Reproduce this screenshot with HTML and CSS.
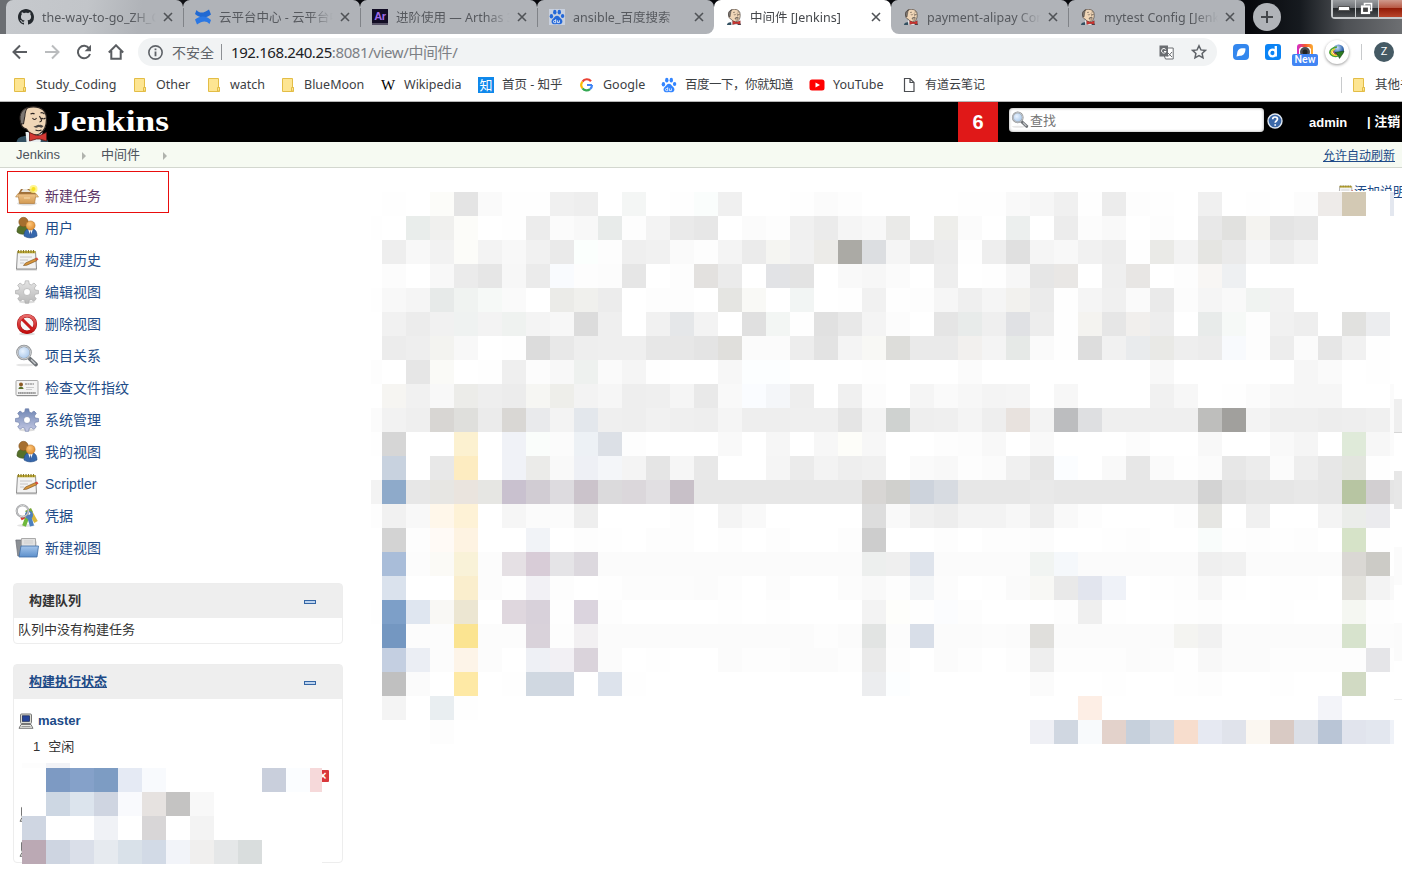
FILE: index.html
```html
<!DOCTYPE html>
<html lang="zh-CN">
<head>
<meta charset="utf-8">
<title>中间件 [Jenkins]</title>
<link rel="stylesheet" href="styles.css">
</head>
<body>
<svg class="defs" width="0" height="0" aria-hidden="true">
  <defs>
    <linearGradient id="gBox" x1="0" y1="0" x2="0" y2="1"><stop offset="0" stop-color="#f0c48a"/><stop offset="1" stop-color="#d29a52"/></linearGradient>
    <linearGradient id="gGrey" x1="0" y1="0" x2="0" y2="1"><stop offset="0" stop-color="#e4e4e4"/><stop offset="1" stop-color="#b9b9b9"/></linearGradient>
    <linearGradient id="gGear" x1="0" y1="0" x2="0" y2="1"><stop offset="0" stop-color="#6f86b4"/><stop offset="1" stop-color="#c5c9e4"/></linearGradient>
    <linearGradient id="gRed" x1="0" y1="0" x2="0" y2="1"><stop offset="0" stop-color="#e86a6a"/><stop offset="1" stop-color="#c40d0d"/></linearGradient>
    <linearGradient id="gBlue" x1="0" y1="0" x2="0" y2="1"><stop offset="0" stop-color="#a5c6ec"/><stop offset="1" stop-color="#5c8fcb"/></linearGradient>
    <linearGradient id="gInsta" x1="0" y1="0" x2="1" y2="0"><stop offset="0" stop-color="#d22bd0"/><stop offset=".5" stop-color="#f5552f"/><stop offset="1" stop-color="#fbb034"/></linearGradient>
    <radialGradient id="gLens" cx=".4" cy=".4" r=".7"><stop offset="0" stop-color="#e9f3ff"/><stop offset="1" stop-color="#9dbfe6"/></radialGradient>
    <radialGradient id="gGlobe" cx=".4" cy=".3" r=".8"><stop offset="0" stop-color="#c4dcf5"/><stop offset=".6" stop-color="#3c6fb5"/><stop offset="1" stop-color="#1a3566"/></radialGradient>
    <radialGradient id="gHead" cx=".4" cy=".35" r=".7"><stop offset="0" stop-color="#ffc77c"/><stop offset="1" stop-color="#dd8a2c"/></radialGradient>

    <symbol id="close" viewBox="0 0 10 10"><path d="M1 1l8 8M9 1L1 9" stroke="#505357" stroke-width="1.600" fill="none"/></symbol>
    <symbol id="butler" viewBox="0 0 32 36">
      <path d="M0 36c1-4 3-5 8-6h16c5 1 6 2 8 6z" fill="#335061"/>
      <path d="M9 26l1 10h14l2-10z" fill="#e9eef0"/>
      <path d="M4 14C3 5 9 .8 17 .8S30 5 30 13c0 8-2 12-7 15-5 2-10 0-13-5-5-1-6-5-6-9z" fill="#f0d6b7" stroke="#2b2421" stroke-width="1.200"/>
      <path d="M4 16C2 8 6 3 11 1.600 8 6 9 9 8 12l-1 6c-2 0-3-1-3-2z" fill="#7c7672" stroke="#2b2421"/>
      <path d="M14 8c2-1 3-1 4 0M24 7c2-1 3 0 4 1M16 12c1 2 3 2 4 0M25 12c1 1 3 1 4 0M23 10c1 3 4 5 0 6M19 24c2 1 4 1 6 0" fill="none" stroke="#2b2421" stroke-width="1.100"/>
      <path d="M17 20c2 1 4-2 6-1 2-1 3 1 4 1-2 3-3 1-5 1-2 1-4 1-5-1z" fill="#4a4542"/>
      <path d="M13 26.500l7 3h3l7-3v8.500l-7-2h-3l-7 2z" fill="#d33833" stroke="#5c1613" stroke-width=".8"/>
    </symbol>
    <symbol id="paw" viewBox="0 0 16 16"><ellipse cx="2.400" cy="7.200" rx="1.700" ry="2.200"/><ellipse cx="5.800" cy="3.200" rx="1.700" ry="2.400"/><ellipse cx="10.300" cy="3.200" rx="1.700" ry="2.400"/><ellipse cx="13.600" cy="7" rx="1.700" ry="2.100"/><path d="M8 6.800c2 0 2.500 1.800 4 3 2.200 1.800 1.800 5-1 5.400-1.500.2-2-.2-3-.2s-1.500.4-3 .2c-2.800-.4-3.200-3.600-1-5.400 1.500-1.200 2-3 4-3z"/><path d="M6.700 10.200v3.500H5.600a1.100 1.100 0 010-2.200h1M8.400 11.400v2.200h2v-2.200" fill="none" stroke="#fff" stroke-width=".8"/></symbol>
    <symbol id="folder" viewBox="0 0 16 16"><path d="M2.500 1.500h10v9h1v4h-11z" fill="#fde592" stroke="#e3bd46"/><path d="M11.500 14v-3.500h2V14z" fill="#fde592" stroke="#e3bd46"/></symbol>

    <symbol id="box" viewBox="0 0 24 24">
      <ellipse cx="12" cy="19.500" rx="10" ry="2" fill="#ddd"/>
      <path d="M3 10l3-5h11l4 5z" fill="#a0703a"/><path d="M6 8l2-3h4l4 3z" fill="#e9e4da"/>
      <path d="M3 10h18l-1.500 9.500h-15z" fill="url(#gBox)" stroke="#b07d3e" stroke-width=".7"/>
      <path d="M3 9.500L.6 13h3M21 9.500l2.500 3.500h-3" fill="#efc890" stroke="#b07d3e" stroke-width=".6"/><path d="M9 14h6" stroke="#f7dcae"/>
      <circle cx="18.500" cy="5" r="4" fill="#fff27a" opacity=".85"/><circle cx="18.500" cy="5" r="2" fill="#f7e11c"/>
    </symbol>
    <symbol id="users" viewBox="0 0 24 24">
      <path d="M2 16c0-5 2-7 6-7s6 3 6 7c-3 3-9 3-12 0z" fill="#55702a" stroke="#3b4f1b" stroke-width=".6"/>
      <circle cx="8.500" cy="6" r="4.700" fill="#a66f2f" stroke="#7d501d" stroke-width=".5"/>
      <path d="M9 20c0-5 2-7.500 6.500-7.500S22 15 22 20c-4 2.500-9 2.500-13 0z" fill="#3567ac" stroke="#234a82" stroke-width=".6"/>
      <path d="M13 13l2.500 7 2.500-7z" fill="#fff"/><path d="M15.500 14l1 5-1 2-1-2z" fill="#3c5fa0"/>
      <circle cx="15.500" cy="9.500" r="4.600" fill="url(#gHead)" stroke="#b16c1f" stroke-width=".5"/>
    </symbol>
    <symbol id="notepad" viewBox="0 0 24 24">
      <path d="M1 21.500h21" stroke="#ccc" stroke-width="2"/>
      <path d="M2.500 3.500h18l1 17.500h-20z" fill="#f3f3f3" stroke="#8f8f8f"/>
      <path d="M2.500 3h18v2.300h-18z" fill="#c4b03a"/><path d="M3.500 2v3M6 2v3M8.500 2v3M11 2v3M13.500 2v3M16 2v3M18.500 2v3" stroke="#8c7c25" stroke-width="1.100"/>
      <path d="M5 9h12M5 12h8M5 15h4" stroke="#c6c6c6"/>
      <path d="M8.500 17.500l2-2.500 10-4.500 1.300 2.200-10 4.500z" fill="#d9963c" stroke="#714919" stroke-width=".6"/><path d="M20 10.300l2-.8 1.500 2-1.900 1z" fill="#d64a3f"/>
    </symbol>
    <symbol id="cog" viewBox="0 0 24 24">
      <ellipse cx="12" cy="22" rx="8" ry="1.300" fill="#ddd" stroke="none"/>
      <path fill-rule="evenodd" d="M10.300.8h3.400l.6 3.300 2 .8L19 3l2.300 2.300-1.900 2.700.8 2 3.300.5v3.200l-3.300.6-.8 2 1.900 2.700-2.400 2.300-2.700-1.800-1.900.8-.6 3h-3.400l-.6-3-2-.8L5 21.300 2.700 19l1.900-2.700-.8-2-3.300-.6v-3.200l3.300-.5.8-2L2.700 5.300 5 3l2.700 1.900 2-.8zM12 8.500a3.500 3.500 0 100 7 3.500 3.500 0 000-7z"/>
    </symbol>
    <symbol id="no" viewBox="0 0 24 24"><ellipse cx="12" cy="22" rx="8" ry="1.300" fill="#ddd"/><circle cx="12" cy="12" r="8.300" fill="#f6f6f6" stroke="#a51010" stroke-width="3.600"/><path d="M6 6l12 12" stroke="#c91a1a" stroke-width="3"/><circle cx="12" cy="12" r="8.300" fill="none" stroke="url(#gRed)" stroke-width="2.800"/></symbol>
    <symbol id="lens" viewBox="0 0 24 24"><ellipse cx="10" cy="21" rx="9" ry="1.300" fill="#e6e6e6"/><path d="M14.500 14.500l6.500 6" stroke="#6d7176" stroke-width="3.800" stroke-linecap="round"/><path d="M16 15.500l4.500 4.500" stroke="#c4c7ca" stroke-width="1.500"/><circle cx="9" cy="8.500" r="6.700" fill="url(#gLens)" stroke="#8c9094" stroke-width="2.200"/><circle cx="9" cy="8.500" r="6.500" fill="none" stroke="#e4e6e8" stroke-width=".8"/></symbol>
    <symbol id="idcard" viewBox="0 0 24 24"><rect x="1" y="4.500" width="22" height="15" rx="1" fill="#f4f4f4" stroke="#a9a9a9"/><path d="M2 19.700h20" stroke="#888"/><circle cx="6" cy="8.500" r="2" fill="#8b5a24"/><path d="M3.500 13c0-3 5-3 5 0z" fill="#58702a"/><path d="M10 8h9" stroke="#777" stroke-dasharray="2 .5"/><path d="M11 11.500h8M11 13.500h6" stroke="#ccc"/><path d="M3 17h18" stroke="#9d9d9d" stroke-width="1.800" stroke-dasharray="1.500 .3"/></symbol>
    <symbol id="keys" viewBox="0 0 24 24">
      <ellipse cx="11" cy="21.500" rx="9" ry="1.500" fill="#e4e4e4"/>
      <path d="M16 9l5 9" stroke="#d9b83a" stroke-width="4"/><path d="M10 7l6-3 2 4-4 4z" fill="#7aa93a"/><path d="M6 15l4-2" stroke="#d93b32" stroke-width="3"/><path d="M12 14l-3 8" stroke="#6fb83c" stroke-width="4"/>
      <circle cx="14" cy="11" r="4" fill="#4d80bd"/><path d="M14 12l3 10" stroke="#4d80bd" stroke-width="4.200"/><circle cx="14" cy="9.500" r="1.200" fill="#fff"/>
      <circle cx="7.500" cy="7" r="5.800" fill="none" stroke="#8d8f92" stroke-width="2"/><circle cx="7.500" cy="7" r="5.800" fill="none" stroke="#ececec" stroke-width=".8"/>
    </symbol>
    <symbol id="bigfolder" viewBox="0 0 24 24"><path d="M.8 4h6l1 1.500h13V20h-18z" fill="#8b8f94" stroke="#6b6f75" stroke-width=".7"/><path d="M6.500 2.500h14v10h-14z" fill="#e2e2e2" stroke="#aaa"/><path d="M9 5h9M9 7h9" stroke="#cfcfcf"/><path d="M6 10h17.500L22 21H4z" fill="url(#gBlue)" stroke="#3f6da5" stroke-width=".8"/></symbol>
    <symbol id="computer" viewBox="0 0 16 16"><rect x="2.500" y="1" width="11" height="9.500" rx="1" fill="#dcdcd4" stroke="#777"/><rect x="4.500" y="2.800" width="7" height="5.500" fill="#26459a" stroke="#14224f" stroke-width=".7"/><path d="M3 11.500h10l2 3.800H1z" fill="#e9e9e4" stroke="#777"/><path d="M3.500 13.500h9" stroke="#999"/></symbol>
  </defs>
</svg>

<div class="tabs">
  <div class="tab first">
    <svg class="fav" viewBox="0 0 16 16"><path fill="#24292e" d="M8 0C3.580 0 0 3.580 0 8c0 3.540 2.290 6.530 5.470 7.590.4.070.55-.17.55-.38 0-.19-.01-.82-.01-1.490-2.010.37-2.530-.49-2.690-.94-.09-.23-.48-.94-.82-1.130-.28-.15-.68-.52-.01-.53.63-.01 1.080.58 1.230.82.72 1.210 1.870.87 2.330.66.070-.52.280-.87.510-1.070-1.780-.2-3.640-.89-3.640-3.950 0-.87.31-1.590.82-2.150-.08-.2-.36-1.020.08-2.120 0 0 .67-.21 2.200.82.64-.18 1.320-.27 2-.27s1.360.09 2 .27c1.530-1.040 2.200-.82 2.200-.82.44 1.100.16 1.920.08 2.120.51.56.82 1.270.82 2.150 0 3.070-1.870 3.750-3.650 3.950.29.25.54.73.54 1.480 0 1.070-.01 1.930-.01 2.200 0 .21.15.46.55.38A8.010 8.010 0 0016 8c0-4.420-3.580-8-8-8z"/></svg>
    <span class="tab-title">the-way-to-go_ZH_CN</span><svg class="x"><use href="#close"/></svg>
  </div>
  <div class="tab sep">
    <svg class="fav" viewBox="0 0 16 16"><path fill="#2169d2" d="M1.500 1C5 5 9 4 14 .5l2 5C11 9.500 5 9.500 0 5z"/><path fill="#2b78e4" d="M14.500 15C11 11 7 12 2 15.500l-2-5C5 6.500 11 6.500 16 11z"/></svg>
    <span class="tab-title">云平台中心 - 云平台中心</span><svg class="x"><use href="#close"/></svg>
  </div>
  <div class="tab sep">
    <span class="fav arthas">Ar</span>
    <span class="tab-title">进阶使用 — Arthas 3.1</span><svg class="x"><use href="#close"/></svg>
  </div>
  <div class="tab sep beforeactive">
    <span class="fav pawbox"><svg viewBox="0 0 16 16" fill="#2468d8"><use href="#paw"/></svg></span>
    <span class="tab-title">ansible_百度搜索</span><svg class="x"><use href="#close"/></svg>
  </div>
  <div class="tab active">
    <svg class="fav"><use href="#butler"/></svg>
    <span class="tab-title">中间件 [Jenkins]</span><svg class="x"><use href="#close"/></svg>
  </div>
  <div class="tab afteractive">
    <svg class="fav"><use href="#butler"/></svg>
    <span class="tab-title">payment-alipay Config</span><svg class="x"><use href="#close"/></svg>
  </div>
  <div class="tab sep last">
    <svg class="fav"><use href="#butler"/></svg>
    <span class="tab-title">mytest Config [Jenkins]</span><svg class="x"><use href="#close"/></svg>
  </div>
  <div class="newtab"><svg viewBox="0 0 14 14" width="14" height="14"><path d="M7 1v12M1 7h12" stroke="#44474b" stroke-width="2"/></svg></div>
  <div class="winbtns">
    <span class="wb"><svg width="12" height="6"><rect x=".5" y=".5" width="11" height="4" fill="#fff" stroke="#555"/></svg></span>
    <span class="wb"><svg width="14" height="14" viewBox="0 0 14 14"><path d="M4.500 3.500v-2h7v7h-2" fill="none" stroke="#fff" stroke-width="1.600"/><rect x="2" y="4.500" width="7" height="6.500" fill="#444" stroke="#fff" stroke-width="2.200"/></svg></span>
    <span class="wb red"></span>
  </div>
</div>

<div class="toolbar">
  <div class="nav">
    <svg viewBox="0 0 16 16"><path d="M15 8H2M8 1.500L1.500 8 8 14.500" fill="none" stroke="#5a5d61" stroke-width="2"/></svg>
    <svg viewBox="0 0 16 16"><path d="M1 8h13M8 1.500L14.500 8 8 14.500" fill="none" stroke="#babcbe" stroke-width="2"/></svg>
    <svg viewBox="0 0 16 16"><path d="M13.200 4.500A6.200 6.200 0 1014 10" fill="none" stroke="#5a5d61" stroke-width="2"/><path d="M15 .8v6.400H8.600z" fill="#5a5d61"/></svg>
    <svg viewBox="0 0 16 16"><path d="M.8 8.500L8 1.300l7.200 7.200M3.300 7v7.800h9.400V7" fill="none" stroke="#5a5d61" stroke-width="2"/></svg>
  </div>
  <div class="omnibox">
    <svg class="info" viewBox="0 0 14 14"><circle cx="7" cy="7" r="6.200" fill="none" stroke="#5f6368" stroke-width="1.500"/><path d="M7 6v4.500M7 3.300v1.500" stroke="#5f6368" stroke-width="1.700"/></svg>
    <span class="insecure">不安全</span><span class="bar"></span>
    <span class="url"><b>192.168.240.25</b>:8081/view/中间件/</span>
    <svg class="translate" viewBox="0 0 15 15"><path d="M9 3h5.200v11H6.500l-1.200-3" fill="#fff" stroke="#6a6d71"/><path d="M9 11.500l4-4.500M9 8l4 4" fill="none" stroke="#6a6d71"/><rect x=".5" y=".5" width="8.500" height="11" fill="#6a6d71"/><path d="M6.700 4.500a2.300 2.300 0 10.300 2H5" fill="none" stroke="#fff"/></svg>
    <svg class="star" viewBox="0 0 16 16"><path d="M8 1.800l1.900 4.100 4.500.5-3.300 3 .9 4.400L8 11.600l-4 2.200.9-4.400-3.300-3 4.500-.5z" fill="none" stroke="#5f6368" stroke-width="1.500"/></svg>
  </div>
  <div class="exts">
    <svg class="ext" viewBox="0 0 16 16"><rect width="16" height="16" rx="4" fill="#3387ee"/><path d="M12.500 4.500c-4-1-8 0-8.300 4.500L3.500 12.500 7 11.800c3.500 0 5.500-2.800 5.500-7.300z" fill="#fff"/></svg>
    <svg class="ext" viewBox="0 0 16 16"><rect width="16" height="16" rx="3" fill="#0b84f5"/><circle cx="7.500" cy="9" r="3.300" fill="none" stroke="#fff" stroke-width="2.300"/><path d="M10.800 2v10.500" stroke="#fff" stroke-width="2.300"/></svg>
    <span class="ext shot"><svg viewBox="0 0 16 16"><rect width="16" height="16" rx="3" fill="url(#gInsta)"/><path d="M2 5l2-2h8l2 2v9H2z" fill="#fff"/><circle cx="8" cy="8" r="5" fill="#4b4b50"/><circle cx="8" cy="8" r="2.500" fill="#222"/></svg><em>New</em></span>
    <span class="ext idm"><svg viewBox="0 0 16 16"><circle cx="9.500" cy="6" r="5.500" fill="url(#gGlobe)"/><path d="M8 3c-5 0-7.500 4-7 6s4 4 8 3" fill="none" stroke="#4aa332" stroke-width="1.700"/><path d="M6 5C3 6 2 8 3 9.500s3 2 5 1.500" fill="none" stroke="#f0d12a" stroke-width="1.400"/><path d="M5 7c-1 2 0 3 3 3" fill="none" stroke="#e0401f"/><path d="M6 8.500l9-1.500-1 2.500-3.500 5-2-4z" fill="#2c7c20" stroke="#123d10" stroke-width=".5"/></svg></span>
    <span class="vbar"></span>
    <span class="avatar">Z</span>
  </div>
</div>

<div class="bookmarks">
  <div class="bm w120"><svg><use href="#folder"/></svg>Study_Coding</div>
  <div class="bm w74"><svg><use href="#folder"/></svg>Other</div>
  <div class="bm w74"><svg><use href="#folder"/></svg>watch</div>
  <div class="bm w100"><svg><use href="#folder"/></svg>BlueMoon</div>
  <div class="bm w98"><span class="wiki">W</span>Wikipedia</div>
  <div class="bm w101"><span class="zhi">知</span>首页 - 知乎</div>
  <div class="bm w82"><svg viewBox="0 0 16 16"><path d="M8 8h5" stroke="#4285f4" stroke-width="2"/><path d="M3.500 4.700A5.200 5.200 0 0112 4.200" fill="none" stroke="#ea4335" stroke-width="2.200"/><path d="M3.500 4.700a5.200 5.200 0 000 6.600" fill="none" stroke="#fbbc05" stroke-width="2.200"/><path d="M3.500 11.300a5.200 5.200 0 007.500.8" fill="none" stroke="#34a853" stroke-width="2.200"/><path d="M11 12.100A5 5 0 0013 8" fill="none" stroke="#4285f4" stroke-width="2.200"/></svg>Google</div>
  <div class="bm w148"><svg viewBox="0 0 16 16" fill="#3385ff"><use href="#paw"/></svg><span class="baidu">百度一下，你就知道</span></div>
  <div class="bm w92"><svg viewBox="0 0 16 16"><rect x=".5" y="2.500" width="15" height="11" rx="2.500" fill="#f00"/><path d="M6.500 5.500v5L11 8z" fill="#fff"/></svg>YouTube</div>
  <div class="bm note"><svg viewBox="0 0 16 16"><path d="M3.500 1.500h5.500l4 4v9H3.500zM9 1.500v4h4" fill="#fff" stroke="#4b4e52" stroke-width="1.200"/></svg>有道云笔记</div>
  <div class="bm other"><svg><use href="#folder"/></svg>其他书签</div>
</div>

<header class="header">
  <svg class="logo-face"><use href="#butler"/></svg>
  <svg class="logo-text" width="120" height="36"><text x="0" y="26" textLength="116" lengthAdjust="spacingAndGlyphs">Jenkins</text></svg>
  <div class="notice">6</div>
  <div class="search"><svg><use href="#lens"/></svg><span>查找</span></div>
  <svg class="help" viewBox="0 0 16 16"><circle cx="8" cy="8" r="7" fill="#3b68a8" stroke="#dfe7f1" stroke-width="1.400"/><path d="M5.700 6.300c0-3 4.800-3 4.800-.2C10.500 8 8.200 8 8.200 9.800M8.200 11.200v1.600" fill="none" stroke="#fff" stroke-width="1.700"/></svg>
  <a class="user">admin</a>
  <span class="logout">| 注销</span>
</header>

<nav class="crumbs">
  <span class="root">Jenkins</span><i class="first-arrow"></i><span class="view">中间件</span><i></i>
  <a class="refresh">允许自动刷新</a>
</nav>

<div class="page">
  <aside class="side">
    <div class="tasks">
      <a class="visited"><svg><use href="#box"/></svg><span>新建任务</span></a>
      <a><svg><use href="#users"/></svg><span>用户</span></a>
      <a><svg><use href="#notepad"/></svg><span>构建历史</span></a>
      <a><svg fill="url(#gGrey)" stroke="#a5a5a5" stroke-width=".6"><use href="#cog"/></svg><span>编辑视图</span></a>
      <a><svg><use href="#no"/></svg><span>删除视图</span></a>
      <a><svg><use href="#lens"/></svg><span>项目关系</span></a>
      <a><svg><use href="#idcard"/></svg><span>检查文件指纹</span></a>
      <a><svg fill="url(#gGear)" stroke="#6677a3" stroke-width=".6"><use href="#cog"/></svg><span>系统管理</span></a>
      <a><svg><use href="#users"/></svg><span>我的视图</span></a>
      <a><svg><use href="#notepad"/></svg>Scriptler</a>
      <a><svg><use href="#keys"/></svg><span>凭据</span></a>
      <a><svg><use href="#bigfolder"/></svg><span>新建视图</span></a>
      <div class="highlight"></div>
    </div>
    <section class="pane">
      <h2>构建队列<span class="collapse"></span></h2>
      <p>队列中没有构建任务</p>
    </section>
    <section class="pane executors">
      <h2><a>构建执行状态</a><span class="collapse"></span></h2>
      <div class="node"><svg><use href="#computer"/></svg>master</div>
      <div class="slot"><span>1</span>空闲</div>
      <div class="stop">×</div>
      <div class="hidden-nodes"><svg><use href="#computer"/></svg><svg><use href="#computer"/></svg></div>
      <div class="mosaic mosaic-side"></div>
    </section>
  </aside>
  <main class="main">
    <a class="describe"><svg><use href="#notepad"/></svg><span>添加说明</span></a>
    <div class="rows"><div class="thead"></div><div class="r1"></div><div class="r2"></div><div class="r2"></div><div class="tend"></div></div>
    <div class="mosaic mosaic-main"></div>
  </main>
</div>
<script src="mosaic.js"></script>
</body>
</html>
```

FILE: styles.css
```css
* { box-sizing: border-box; }
body { margin: 0; width: 1402px; height: 874px; overflow: hidden; background: #fff; font-family: "Liberation Sans", "Noto Sans CJK SC", sans-serif; font-size: 13px; color: #333; }
.defs { position: absolute; }
svg { display: block; flex: none; }

.tabs, .toolbar, .bookmarks { font-family: "Noto Sans", "Noto Sans CJK SC", sans-serif; white-space: nowrap; }
.tabs { display: flex; height: 34px; padding-left: 6px; overflow: hidden; background: linear-gradient(90deg, #6b6e72 0, #6b6e72 12px, #07080c 200px, #07080c 1250px, #161a1f 1300px, #4d5054 1345px, #6d6f72 1402px); }
.tab { position: relative; z-index: 1; display: flex; align-items: center; width: 177px; height: 34px; padding: 0 10px 0 12px; background: #b0b3b8; border-radius: 7px 7px 0 0; font-size: 12.500px; color: #56595e; }
.tab.first { background: linear-gradient(100deg, #c6c9cd 0, #c2c5c9 45%, #b0b3b8 75%); }
.tab.sep::before { content: ""; position: absolute; left: 0; top: 8px; width: 1px; height: 19px; background: #808388; }
.tab.active { z-index: 0; background: #fff; color: #45484c; }
.tab.active::before, .tab.active::after { content: ""; position: absolute; bottom: 0; width: 8px; height: 8px; background: #fff; }
.tab.active::before { left: -8px; }
.tab.active::after { right: -8px; }
.tab.beforeactive { border-radius: 7px 7px 8px 0; }
.tab.afteractive { border-radius: 7px 7px 0 8px; }
.fav { width: 16px; height: 16px; margin-right: 8px; flex: none; }
.arthas { background: #120d24; color: #a06be8; font: bold 11px/14px "Liberation Sans", sans-serif; text-align: center; border-bottom: 2px solid #555064; letter-spacing: -.3px; }
.pawbox { background: #c8d0de; }
.pawbox svg { width: 16px; height: 16px; }
.tab-title { width: 117px; overflow: hidden; padding-top: 1px; line-height: 22px; -webkit-mask-image: linear-gradient(90deg, #000 90px, transparent 114px); mask-image: linear-gradient(90deg, #000 90px, transparent 114px); }
.x { width: 10px; height: 10px; margin-left: 4px; }
.newtab { display: flex; align-items: center; justify-content: center; width: 28px; height: 28px; margin: 3px 0 0 8px; border-radius: 50%; background: #b0b3b8; }
.winbtns { display: flex; width: 71px; height: 19px; margin-left: 50px; border: 1px solid #c6c9cb; border-width: 0 0 2px 2px; border-radius: 0 0 0 4px; }
.wb { display: flex; align-items: center; justify-content: center; width: 28px; background: linear-gradient(#9a9da0, #6f7276 45%, #25282b 50%, #4c4f52); border-right: 1px solid #c6c9cb; }
.wb.red { background: linear-gradient(#cf9a8d, #b85a46 45%, #931c08 50%, #b8452b); border: 0; }

.toolbar { display: flex; align-items: center; height: 36px; padding-left: 12px; background: #fff; }
.nav { display: flex; gap: 16px; width: 126px; }
.nav svg { width: 16px; height: 16px; }
.omnibox { display: flex; align-items: center; width: 1079px; height: 28px; padding: 0 10px; border-radius: 14px; background: #f1f3f4; }
.info { width: 15px; height: 15px; margin-right: 9px; }
.insecure { width: 42px; padding-bottom: 1px; font-size: 14px; color: #5f6368; }
.bar { width: 1px; height: 16px; margin: 0 9px 0 7px; background: #8d9094; }
.url { flex: 1; padding-bottom: 1px; font-size: 15px; letter-spacing: -.4px; line-height: 26px; color: #7c8085; }
.url b { font-weight: 400; color: #202124; }
.translate { width: 15px; height: 15px; margin-right: 17px; }
.star { width: 16px; height: 16px; }
.exts { display: flex; align-items: center; padding-left: 16px; }
.ext { width: 16px; height: 16px; margin-right: 16px; }
.shot { position: relative; }
.shot em { position: absolute; left: -5px; top: 10px; width: 26px; height: 12px; border-radius: 2px; background: #4285f4; color: #fff; font: 500 10.500px/12px Roboto, sans-serif; text-align: center; }
.idm { display: flex; align-items: center; justify-content: center; width: 24px; height: 24px; margin: 0 12px 0 -4px; border-radius: 50%; box-shadow: 0 1px 3px #999; }
.idm svg { width: 16px; height: 16px; }
.vbar { width: 1px; height: 16px; margin-right: 12px; background: #c8cacc; }
.avatar { width: 20px; height: 20px; border-radius: 50%; background: #455a64; color: #fff; font: 11px/20px Roboto, sans-serif; text-align: center; }

.bookmarks { display: flex; align-items: center; height: 32px; padding: 0 0 1px 12px; overflow: hidden; font-size: 12.500px; color: #3c4043; border-bottom: 1px solid #b6b6b6; }
.bm { display: flex; align-items: center; flex: none; line-height: 24px; }
.bm svg { width: 16px; height: 16px; margin-right: 8px; }
.w120 { width: 120px; } .w74 { width: 74px; } .w100 { width: 100px; } .w98 { width: 98px; } .w101 { width: 101px; } .w82 { width: 82px; } .w148 { width: 148px; } .w92 { width: 92px; }
.baidu { letter-spacing: -.5px; }
.note { font-size: 12px; }
.bm.other { position: relative; margin-left: auto; width: 51px; }
.bm.other::before { content: ""; position: absolute; left: -10px; top: 4px; width: 1px; height: 16px; background: #c8cacc; }
.wiki { width: 16px; margin-right: 8px; font: 15px/16px "Liberation Serif", serif; color: #000; text-align: center; }
.zhi { width: 16px; height: 16px; margin-right: 8px; background: #0f88eb; color: #fff; font-size: 13px; line-height: 16px; text-align: center; }

.header { display: flex; height: 40px; background: #000; color: #fff; font-weight: 700; overflow: hidden; }
.logo-face { width: 33px; height: 36px; margin: 4px 0 0 16px; }
.logo-text { margin: 3px 0 0 4px; fill: #fff; font: bold 29px "Liberation Serif", serif; }
.notice { width: 40px; height: 40px; margin-left: 785px; background: #e01818; font-size: 20px; line-height: 40px; text-align: center; }
.search { display: flex; align-items: center; width: 255px; height: 24px; margin: 6px 0 0 11px; padding-left: 2px; border-radius: 4px; background: #fff; box-shadow: inset 0 0 3px #999; color: #757575; font-weight: 400; }
.search svg { width: 18px; height: 18px; margin-right: 1px; }
.search span { padding-bottom: 2px; }
.help { width: 16px; height: 16px; margin: 11px 0 0 3px; }
.user { width: 58px; margin-left: 26px; line-height: 41px; }
.logout { white-space: nowrap; line-height: 40px; }

.crumbs { display: flex; align-items: center; height: 26px; padding: 0 7px 0 16px; background: #f6faf2; border-bottom: 1px solid #d3d7cf; color: #4d545d; font-size: 13px; }
.crumbs i { width: 0; height: 0; margin-left: 23px; margin-top: 3px; border: 4px solid transparent; border-left-color: #b0b3ad; border-right: 0; }
.crumbs .first-arrow { margin-right: 15px; margin-left: 22px; }
.crumbs .root { width: 44px; padding-bottom: 1px; }
.crumbs .view { padding-bottom: 3px; }
.refresh { margin-left: auto; font-size: 12px; color: #204a87; text-decoration: underline; }

.page { display: flex; height: 706px; }
.side { width: 371px; padding: 12px 0 0 13px; }
.tasks { position: relative; width: 330px; margin-bottom: 19px; }
.tasks a { display: flex; align-items: center; height: 32px; padding-left: 2px; font-size: 14px; color: #204a87; }
.tasks a.visited { color: #5c3566; }
.tasks a span { padding-bottom: 2px; }
.tasks svg { width: 24px; height: 24px; margin-right: 6px; overflow: visible; }
.highlight { position: absolute; left: -6px; top: -9px; width: 162px; height: 42px; border: 1px solid #e90d0d; }
.pane { position: relative; width: 330px; margin-bottom: 20px; border: 1px solid #ededed; border-radius: 4px; height: 61px; }
.pane h2 { display: flex; align-items: center; justify-content: space-between; height: 34px; margin: 0; padding: 0 26px 3px 15px; background: #eee; font-size: 13px; color: #333; }
.pane h2 a { color: #204a87; text-decoration: underline; }
.collapse { width: 12px; height: 4px; margin-top: 4px; border: 1px solid #3465a4; background: #bcd3ee; }
.pane p { margin: 0; padding: 0 4px; line-height: 24px; }
.executors { height: 199px; }
.node { display: flex; align-items: center; padding: 11px 0 0 4px; height: 32px; font-weight: 700; color: #204a87; }
.node svg { width: 16px; height: 16px; margin-right: 4px; }
.slot { padding: 5px 0 0 19px; line-height: 21px; }
.slot span { margin-right: 8px; }
.stop { position: absolute; left: 303px; top: 105px; width: 12px; height: 12px; border-radius: 1px; background: #d9383c; color: #fff; font: bold 12px/12px "Liberation Sans", sans-serif; text-align: center; }
.hidden-nodes { display: grid; gap: 19px; padding: 49px 0 0 5px; }
.hidden-nodes svg { width: 16px; height: 16px; }

.main { position: relative; width: 1031px; overflow: hidden; }
.describe { display: flex; align-items: center; width: 80px; margin-left: 967px; padding-top: 14px; color: #204a87; text-decoration: underline; white-space: nowrap; line-height: 20px; }
.describe svg { width: 16px; height: 16px; }
.rows { width: 1031px; padding-top: 197px; }
.thead { height: 34px; background: #efefef; border-bottom: 1px solid #d6d6d6; }
.r1 { height: 38px; margin-top: 38px; background: #e7e7e7; }
.r2 { height: 38px; margin-top: 38px; background: #fbfbfb; }
.tend { height: 39px; border-bottom: 1px solid #ededed; }

.mosaic { position: absolute; display: grid; background: #fff; }
.mosaic-main { left: 0; top: 23px; width: 1023px; padding-top: 1px; grid-template-columns: 11px repeat(42, 24px) 4px; grid-auto-rows: 24px; }
.mosaic-side { left: 8px; top: 98px; width: 300px; grid-template-columns: repeat(12, 24px) 12px; grid-template-rows: 5px; grid-auto-rows: 24px; }
```

FILE: mosaic.js
```js
// One token per cell: "." white, two hex digits for a grey, six for a colour.
// "xN" repeats the previous cell N more times.
const mainRows = [
  ". fe . fcfcf9 e4 fa fe fe f0 ee . f4f6f5 . fe fafdfc f0 . . fe fb fd . . . . fe fe f9 f6 f0 fe ec fd fe . f0 . fe . fc eeebe9 d3c9b4 . e3e7ef",
  "fe . e9edeb f0f0ee fcfcf9 . fe ec fb f8 e8ebea fd f3 ea e7 . fb fd f0 eb f5 f8 eaeae8 . eeeeeb fb . ecefee . ec fc f9 . fd . e8 e1e1df f4f3f0 e4 e7 . x3",
  ". ee f8 f2 fcfcf9 f3 f8 f1 ea fbfffd fd ef f1 fa fd f4 eb f5f5f2 f1 ecebe8 abaaa5 dcdee1 f5 e8 ec fe ee e0 f5 f8 f1 ed fe eaeae7 f3 e5e5e2 ea f5 ed f3 . x3",
  ". fc . f8 eb e6 f7 eb f9fbfe fd fc e6 . fd e3e1df eb . e2e3e6 e3 . f9 f7 fb . ee . fe f7 e6 e9e7e5 . ef e8e6e4 . fd f8f6f4 eef0f2 . x6",
  "fe f8 f5 e7eae9 f0f3f1 f6f9f7 fa . ebebe8 f0f0ed ec . fd fd . e5e5e2 f9f9f6 . f2f5f4 . fe f1 fe fd f6 ef f5 f2f1ee eb fe f5 f0 fa ea fc f5 f9 f0f3f1 f2 . x4",
  ". f1 ec f1 eff2f1 f3 eff2f0 f4 f7 dc ef . f1 e5e7e9 f3 . e0 f3f6f4 fe e1 e8 f4 fc . e5 e8ebea ef e0e1e4 ed fe f4f3f0 e6 f1efed ed . e8ebea f6f9f7 fd f1 ee . e1e1df ecedef .",
  ". ec ee f3f3f0 f8 . fe dc e8 ee ef ef e7 e7 e4 e0dfdc fb fb ed e3 f4 f8f8f5 ddddda ea ea f2f0ee f4 e6e9e7 fa fe dd f1 e9ebed e9e9e6 ee ec f8fafd fd ed fb e6 f1 fe .",
  "fd . e6 fafaf7 . fe ef fc f8 eef1ef fa f5 fe . . f7 fcfeff fcfeff . . . fe . . . fb . x6 f8 . x4 f6 fa . fe .",
  ". f6f5f2 f1 f8 ecece9 ee ec f6f6f3 eeeeea f3 f6 ee ef f5 e9 f9 fafcff f4f6f9 ee . f0 fc . f5 fa f7 f4 f5 . f7 . . . f1 f7 . fe fb f7 f6 f6 . . fb",
  "fb f2 ef d8d6d3 dfdfdc eb d9d7d4 e9eaec f3 e3e7ec ef ee f1 ef ee f5 ee ee ef ef e5 f4 cfd2d0 ee ef f4 ee e8e2de f3 bcbdbf dedfe1 ef ef ef ef bebebc a1a09d f3 ef ef ed ee f0 fb",
  "fe d6 . . fcf1d0 . f0f2f7 fafdfb fb edf1f5 dce0e6 fd . . . f9 . f6 . f7 fdfdf9 f7 . . fd fc f8 . f9 . . . fc . . f8 . . f9 f5 . dfead9 f7 fb",
  ". c8d2df . e8 fdecc1 . f0f2f7 ebebe9 f9 eef0f5 f4f6f9 f4 e5 f6 e8 . . f5 eb f3 ee f0 . fa f8 fd fb f0 e7 fbfdff . f9 e7 fa fe fb e7 ec fb ee e7 e3e5df fe .",
  "f3 8eaaca e7 e7e6e3 eae4de e6e6e3 c9c1cf d1ccd3 dddbdf cbc3cb dbdadc dbd7db e1dfe2 c8c0c8 e7 x6 d8d6d4 d0d0cd cdd3dc d7dbe1 e7 x2 e9 e7 x5 d3 e1 e6 e6 e8 e6 b7c5a2 d2cfd1 e5",
  "fd f1 f8 fff7ea fef2d6 . f6 fb fb ee . . . fd . f4 f9 . x3 dd f9 f0 ed f3 f3 f7 ee f9 fd . . . fd e6e6e3 . f0 . . f4 ebedea ebebee .",
  ". d3 fd fffaf6 fef3e2 . . f1f3f7 . fd fe . fd fd . fd . fd . . fd cd . . fd . fd fd fc . . fe fd . . f9fcfb fe fd fe fd . d6e3c8 fe .",
  ". a9bdd9 fc fbfaf6 f9f2d8 fc e5e0e4 d8ccd7 e5e4e7 dcd8de fb x10 edefee ef dfe4ec fb x3 f1f4f2 f5f8fb fb x4 ef f1 fb x3 dad8d4 cccbc6 .",
  ". dae2ed . . faeecd fc fe f2f1f5 fd . fe fc fc fc fb fd . fc . . fc f9 fd f3f5f7 fc . fe fa f8f8f5 e9 e2e5ee eff2f8 . fe fd f7 fe . fe fe . e2e1dc f3 f9",
  "fe 7d9fc8 dfe6f0 f9f8f5 ece6d2 . dfd7de d8d1da fe dbd4de fd . x3 fe . fe . . . f3 fefefb fe fbfcfe fd . . . fd ef fe . . fe fd . . fe . . f5f7f2 fd fe",
  ". 7497c1 fc fc fbe491 fc fc d9d2da fd f2f0f2 fb x8 fd fb e2e4e3 fc d8dee8 fb fb fc fb e0dfdc fb x4 f4f4f1 f1 fb x4 d7e3cd fc fc",
  ". c4cfe1 ebeef4 fc fdf4e8 fc . eef0f5 f2f0f4 dad3db fb . fe . . fb fd fd fb fb fd ea fd . fb fd . fd ee fd fd fd fb fc fe f8 fb fb fd fd fd fd e5e5e8 fe",
  ". c0 fb . fee9a5 . fe d0d8e1 d0d7e1 . dde3ec fe . x8 ecedef fcfeff . x4 fb . . fe . . fe fd . . fe . . d1dac3 . .",
  ". f4 . e9eef1 fe . x24 fdeee5 . x8 f3f4f9 . x2",
  ". . . fd . x23 eff0f5 d0d7e1 f8fafc e3d2cb c6d0dc d5dbe4 f7ddcd e6e9f2 e0e3eb fbf7f1 d9cac4 dbdfe7 b9c5d6 e1e4ed e3e7ef eff2f8"
];
const sideRows = [
  "fd f2f3f7 . x10",
  ". 7d9ac3 85a1c9 7d9cc3 e5eaf4 f8fafd . x3 c9cfdc fbfdff f6d9da",
  ". cdd7e3 dce4ed cfd5e1 f9fafd e6e2e0 c4c3c2 f8 . x4",
  "cfd6e2 . . f0f2f6 . d8d6d7 . f3 . x4",
  "bba9b4 ced5e1 dadfe9 e6eaef d9e1e9 d2dae6 f2f4f9 f0efee e5e7e8 d9dddd . x2"
];

function paint(selector, rows, columns) {
  const box = document.querySelector(selector);
  for (const row of rows) {
    const cells = [];
    for (const token of row.split(" ")) {
      if (token[0] === "x") {
        for (let n = Number(token.slice(1)); n > 0; n--) cells.push(cells[cells.length - 1]);
      } else if (token === ".") cells.push("fff");
      else cells.push(token.length === 2 ? token.repeat(3) : token);
    }
    while (cells.length < columns) cells.push("fff");
    for (const color of cells.slice(0, columns)) {
      const cell = document.createElement("div");
      cell.style.backgroundColor = "#" + color;
      box.append(cell);
    }
  }
}
paint(".mosaic-main", mainRows, 44);
paint(".mosaic-side", sideRows, 13);
```
